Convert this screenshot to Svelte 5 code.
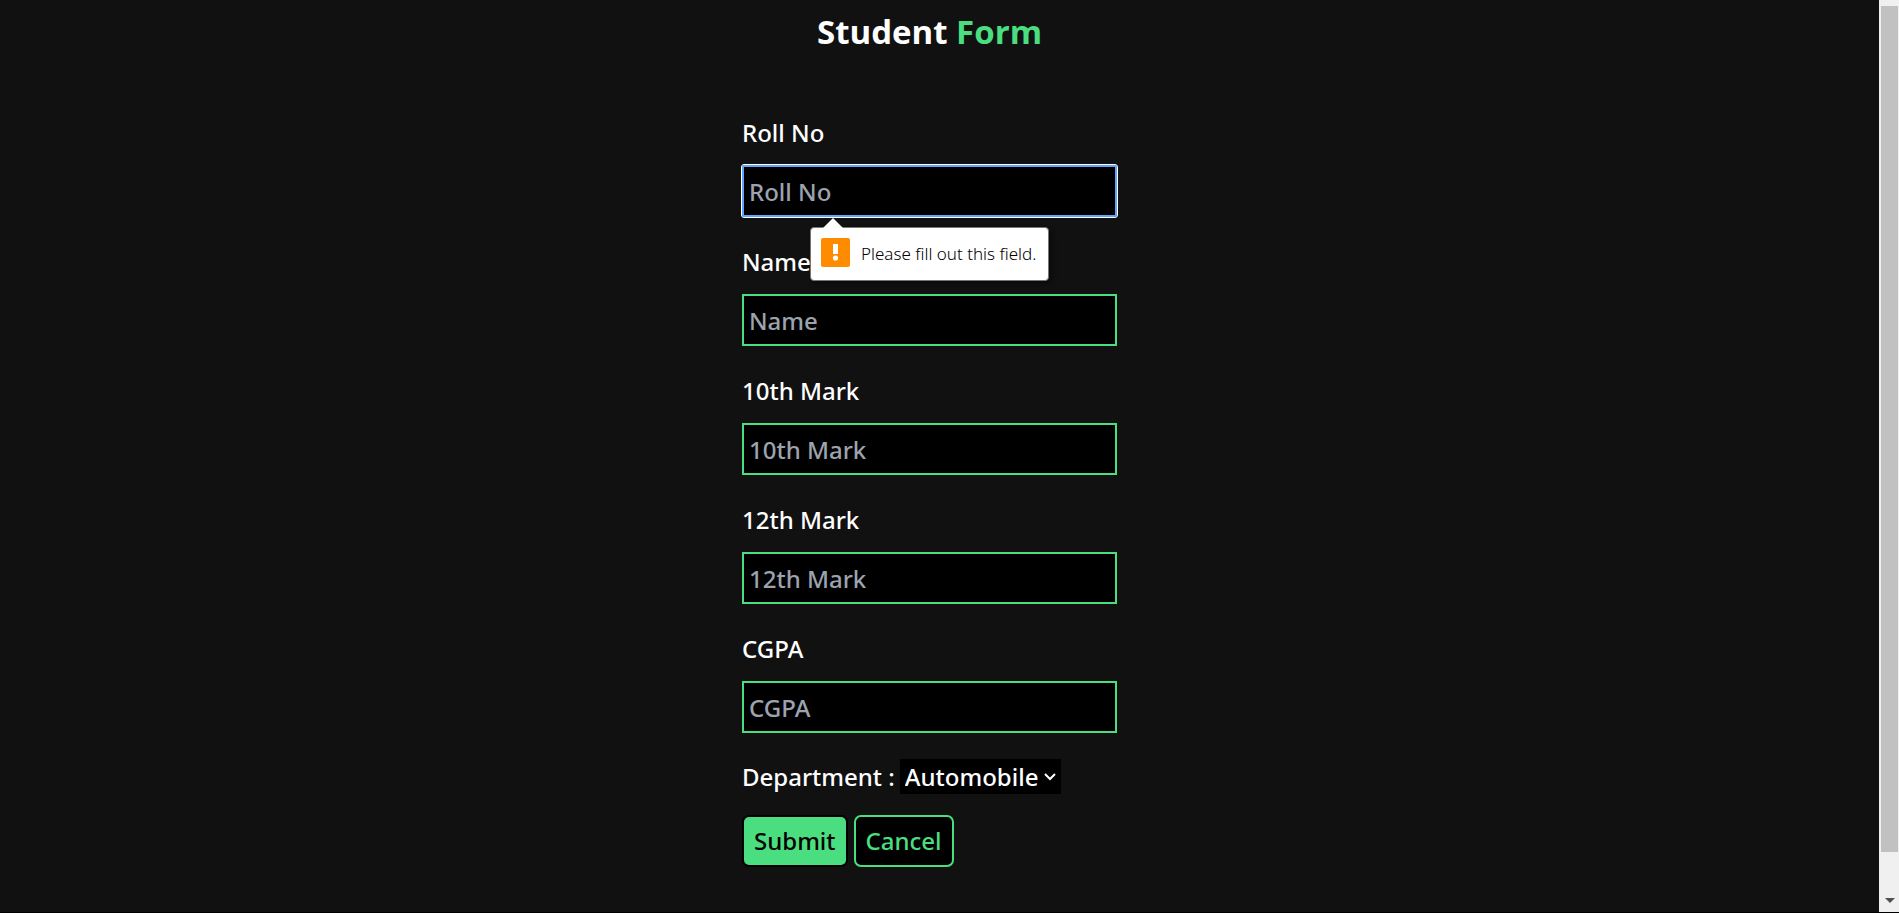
<script>
  const fields = [
    { id: 'roll', label: 'Roll No', invalid: true },
    { id: 'name', label: 'Name' },
    { id: 'tenth', label: '10th Mark' },
    { id: 'twelfth', label: '12th Mark' },
    { id: 'cgpa', label: 'CGPA' }
  ];
</script>

<div class="page">
  <main>
    <h1>Student <span>Form</span></h1>
    <form novalidate onsubmit={(e) => e.preventDefault()}>
      {#each fields as field}
        <div class="field">
          <label for={field.id}>{field.label}</label>
          <input
            id={field.id}
            type="text"
            placeholder={field.label}
            class:active={field.invalid}
            required
          />
          {#if field.invalid}
            <div class="tip" role="alert">
              <svg class="warn" viewBox="0 0 29 29" aria-hidden="true">
                <rect width="29" height="29" rx="2" fill="#ff8c00" />
                <path d="M12 6h5v10h-5z" fill="#fff" />
                <circle cx="14.5" cy="20" r="2.6" fill="#fff" />
              </svg>
              <span>Please fill out this field.</span>
            </div>
          {/if}
        </div>
      {/each}
      <div class="department">
        <label for="department">Department :</label>
        <div class="select">
          <select id="department">
            <option>Automobile</option>
          </select>
          <svg viewBox="0 0 12 8" aria-hidden="true">
            <path d="M1 1l5 5 5-5" fill="none" stroke="#fff" stroke-width="2" />
          </svg>
        </div>
      </div>
      <div class="actions">
        <button class="submit" type="submit">Submit</button>
        <button class="cancel" type="button">Cancel</button>
      </div>
    </form>
  </main>
  <div class="scrollbar" aria-hidden="true">
    <div class="thumb"></div>
    <svg viewBox="0 0 10 5"><path d="M0 0h10L5 5z" fill="#505050" /></svg>
  </div>
</div>

<style>
  :global(body) {
    background: #111;
  }
  .page {
    display: flex;
    box-sizing: border-box;
    min-height: 100vh;
    border-bottom: 1px solid #000;
    background: #111;
    color: #fff;
    font: 500 24px/36px 'Noto Sans', 'Open Sans', sans-serif;
  }
  main {
    flex: 1;
    display: flex;
    flex-direction: column;
    align-items: center;
    gap: 63px;
    padding: 12px 20px 45px 0;
  }
  h1 {
    margin: 0;
    font-family: 'Open Sans', sans-serif;
    font-size: 33px;
    font-weight: 700;
    line-height: 40px;
  }
  h1 span {
    color: #4ade80;
  }
  form {
    width: 375px;
    max-width: 100%;
  }
  .field {
    position: relative;
    display: flex;
    flex-direction: column;
    gap: 14px;
    margin-bottom: 27px;
  }
  input,
  select,
  button {
    box-sizing: border-box;
    margin: 0;
    font: inherit;
  }
  input {
    width: 100%;
    height: 52px;
    padding: 0 5px;
    border: 2px solid #4ade80;
    border-radius: 0;
    background: #000;
    color: #fff;
  }
  input::placeholder {
    color: #9ca3af;
    opacity: 1;
  }
  input.active {
    border-color: #60a5fa;
    border-radius: 2px;
    outline: 1px solid #fff;
  }
  .tip {
    position: absolute;
    z-index: 1;
    top: 112px;
    left: 68px;
    display: flex;
    align-items: center;
    gap: 11px;
    height: 54px;
    box-sizing: border-box;
    padding: 0 12px 0 10px;
    border: 1px solid #767676;
    border-radius: 4px;
    background: #fff;
    color: #000;
    box-shadow: 3px 3px 5px rgb(0 0 0 / 40%);
    font-size: 17px;
    font-weight: 300;
    white-space: nowrap;
  }
  .tip::before {
    content: '';
    position: absolute;
    top: -10px;
    left: 12px;
    border: 10px solid transparent;
    border-top: 0;
    border-bottom-color: #fff;
  }
  .warn {
    width: 29px;
    height: 29px;
    margin-bottom: 4px;
  }
  .department {
    display: flex;
    align-items: flex-start;
    gap: 5px;
    margin-top: -1px;
    white-space: nowrap;
  }
  .select {
    position: relative;
    display: flex;
  }
  select {
    appearance: none;
    height: 35px;
    padding: 0 22px 0 5px;
    border: 0;
    border-radius: 0;
    background: #000;
    color: #fff;
  }
  .select svg {
    position: absolute;
    top: 14px;
    right: 5px;
    width: 12px;
    height: 8px;
    pointer-events: none;
  }
  .actions {
    display: flex;
    gap: 6px;
    margin-top: 20px;
  }
  button {
    height: 52px;
    padding: 0 10px;
    border: 2px solid #000;
    border-radius: 7px;
  }
  .submit {
    background: #4ade80;
    color: #000;
  }
  .cancel {
    border-color: #4ade80;
    background: #000;
    color: #4ade80;
  }
  .scrollbar {
    display: flex;
    flex-direction: column;
    align-items: center;
    width: 20px;
    box-sizing: border-box;
    padding: 6px 1px 9px 2px;
    background: #f0f0f0;
  }
  .thumb {
    width: 17px;
    flex: 1;
    margin-bottom: 46px;
    background: #c1c1c1;
  }
  .scrollbar svg {
    width: 10px;
    height: 5px;
  }
</style>
